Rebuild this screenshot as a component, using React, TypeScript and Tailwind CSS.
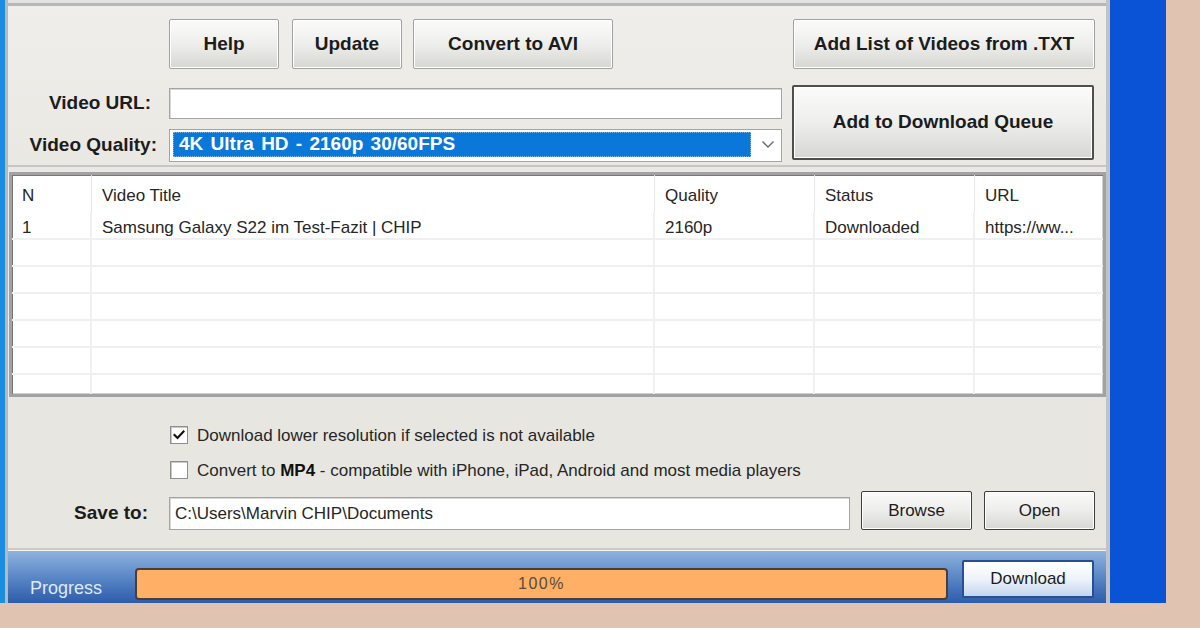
import React from "react";

const F = "font-['Liberation_Sans',Arial,sans-serif]";

function TopButton({ w, children, strong }: { w: string; children: React.ReactNode; strong?: boolean }) {
  return (
    <div
      className={`${w} h-full flex items-center justify-center rounded-[2px] bg-linear-to-b from-[#fbfbfa] via-[#eeeeec] to-[#d6d6d2] text-[19px] font-bold text-[#1c1c1c] ${
        strong ? "border-2 border-[#4e4e4e] shadow-[inset_0_0_0_1px_#ffffff]" : "border border-[#a2a2a2] shadow-[inset_0_0_0_1px_#ffffff]"
      }`}
    >
      {children}
    </div>
  );
}

function SmallButton({ children }: { children: React.ReactNode }) {
  return (
    <div className="w-[111px] h-[39px] flex items-center justify-center rounded-[2px] border border-[#3e3e3e] shadow-[inset_0_0_0_1px_#ffffff] bg-linear-to-b from-[#fafafa] via-[#ededeb] to-[#d7d7d3] text-[17px] text-[#1c1c1c]">
      {children}
    </div>
  );
}

function Checkbox({ checked }: { checked?: boolean }) {
  return (
    <div className="w-[18px] h-[18px] bg-white border border-[#8e8e8e] shadow-[inset_1px_1px_0_#c9c9c9] flex items-center justify-center">
      {checked && (
        <svg width="12" height="12" viewBox="0 0 12 12">
          <path d="M1.5 6 L4.5 9 L10.5 2.5" fill="none" stroke="#111" strokeWidth="2.2" strokeLinecap="square" />
        </svg>
      )}
    </div>
  );
}

const cols = [
  { w: "w-[80px]", h: "N", v: "1" },
  { w: "w-[563px]", h: "Video Title", v: "Samsung Galaxy S22 im Test-Fazit | CHIP" },
  { w: "w-[160px]", h: "Quality", v: "2160p" },
  { w: "w-[160px]", h: "Status", v: "Downloaded" },
  { w: "flex-1", h: "URL", v: "https://ww..." },
];

export default function App() {
  const emptyRows = [0, 1, 2, 3, 4, 5];
  return (
    <div className={`w-[1200px] h-[628px] bg-[#e1c3b2] ${F} overflow-hidden`}>
      <div className="flex h-[603px]">
        <div className="w-[5px] h-full bg-[#1b8ee2]" />
        <div className="w-[1105px] h-full flex flex-col border-l-[3px] border-r-[4px] border-l-[#b9b9b9] border-r-[#c2c2c2] bg-[#ecebe7]">
          <div className="h-[3px] bg-[#e2e2e2]" />
          <div className="h-[3px] bg-[#b7b7b7]" />
          {/* Top section */}
          <div className="h-[159px] flex flex-col pt-[13px] bg-linear-to-b from-[#efeeea] to-[#e9e8e3]">
            <div className="h-[50px] flex pl-[161px] pr-[11px]">
              <TopButton w="w-[110px]">Help</TopButton>
              <div className="w-[13px]" />
              <TopButton w="w-[110px]">Update</TopButton>
              <div className="w-[11px]" />
              <TopButton w="w-[200px]">Convert to AVI</TopButton>
              <div className="flex-1" />
              <TopButton w="w-[302px]">Add List of Videos from .TXT</TopButton>
            </div>
            <div className="mt-[16px] flex">
              <div className="w-[774px] flex flex-col">
                <div className="mt-[3px] h-[31px] flex">
                  <div className="w-[161px] flex items-center justify-end pr-[18px] text-[19px] font-bold text-[#1c1c1c]">Video URL:</div>
                  <div className="flex-1 bg-white border border-[#a4a4a4] shadow-[inset_1px_1px_0_#d8d8d8]" />
                </div>
                <div className="mt-[10px] h-[33px] flex">
                  <div className="w-[161px] flex items-center justify-end pr-[12px] text-[19px] font-bold text-[#1c1c1c]">Video Quality:</div>
                  <div className="flex-1 bg-white border border-[#a4a4a4] flex items-stretch pl-[3px] pt-[2px] pb-[4px]">
                    <div className="w-[578px] bg-[#0a78d8] border border-dotted border-[#7fb6ea] flex items-center pl-[5px] text-[19px] font-bold text-white whitespace-pre [word-spacing:2px]">
                      4K Ultra HD - 2160p 30/60FPS
                    </div>
                    <div className="flex-1 flex items-center justify-center pl-[4px]">
                      <svg width="14" height="9" viewBox="0 0 14 9">
                        <path d="M1.5 1.5 L7 7 L12.5 1.5" fill="none" stroke="#6a6a6a" strokeWidth="1.4" />
                      </svg>
                    </div>
                  </div>
                </div>
              </div>
              <div className="ml-[10px] h-[75px] flex">
                <TopButton w="w-[302px]" strong>Add to Download Queue</TopButton>
              </div>
            </div>
          </div>
          <div className="h-[2px] bg-[#c6c6c4]" />
          <div className="h-[5px] bg-[#e9e8e4]" />
          {/* Table */}
          <div className="h-[225px] ml-[1px] border-[3px] border-[#a2a2a2] shadow-[inset_1px_1px_0_#777777,inset_-1px_-1px_0_#d0d0d0] bg-white overflow-hidden flex flex-col text-[17px] text-[#262626]">
            <div className="h-[38px] flex shrink-0">
              {cols.map((c, i) => (
                <div key={i} className={`${c.w} h-full flex items-center pl-[10px] pt-[4px] ${i < 4 ? "border-r border-[#e6e6e6]" : ""}`}>
                  {c.h}
                </div>
              ))}
            </div>
            <div className="h-[27px] flex shrink-0 border-b-2 border-[#f0f0f0]">
              {cols.map((c, i) => (
                <div key={i} className={`${c.w} h-full flex items-center pl-[10px] pt-[4px] ${i < 4 ? "border-r-2 border-[#f0f0f0]" : ""}`}>
                  {c.v}
                </div>
              ))}
            </div>
            {emptyRows.map((r) => (
              <div key={r} className="h-[27px] flex shrink-0 border-b-2 border-[#f0f0f0]">
                {cols.map((c, i) => (
                  <div key={i} className={`${c.w} h-full ${i < 4 ? "border-r-2 border-[#f0f0f0]" : ""}`} />
                ))}
              </div>
            ))}
          </div>
          <div className="h-[3px] bg-[#e7e6e2]" />
          {/* Options */}
          <div className="h-[148px] flex flex-col pt-[26px] bg-[#e7e6e1] text-[17px] text-[#262626]">
            <div className="h-[18px] flex items-center pl-[162px]">
              <Checkbox checked />
              <span className="ml-[9px] pt-[1px]">Download lower resolution if selected is not available</span>
            </div>
            <div className="mt-[17px] h-[18px] flex items-center pl-[162px]">
              <Checkbox />
              <span className="ml-[9px] pt-[2px]">
                Convert to <b className="font-bold text-[#111]">MP4</b> - compatible with iPhone, iPad, Android and most media players
              </span>
            </div>
            <div className="mt-[12px] h-[39px] flex items-end">
              <div className="w-[161px] h-[33px] flex items-center justify-end pr-[21px] text-[19px] font-bold text-[#1c1c1c]">Save to:</div>
              <div className="w-[681px] h-[33px] bg-white border border-[#a4a4a4] shadow-[inset_1px_1px_0_#d8d8d8] flex items-center pl-[5px]">
                C:\Users\Marvin CHIP\Documents
              </div>
              <div className="ml-[11px]">
                <SmallButton>Browse</SmallButton>
              </div>
              <div className="ml-[12px]">
                <SmallButton>Open</SmallButton>
              </div>
            </div>
          </div>
          <div className="h-[2px] bg-[#c9c9c6]" />
          <div className="h-[1px] bg-[#f4f4f4]" />
          {/* Progress */}
          <div className="h-[52px] flex items-start pl-[22px] bg-linear-to-b from-[#8fb3de] via-[#5a87c6] to-[#2d5cab]">
            <div className="w-[105px] mt-[26px] h-[22px] flex items-center text-[18px] text-[#dfeaf8]">Progress</div>
            <div className="w-[813px] h-[32px] mt-[17px] rounded-[4px] border-2 border-[#4a3f36] bg-[#ffb066] flex items-center justify-center text-[16px] tracking-[1.5px] text-[#5a4a3a]">
              100%
            </div>
            <div className="ml-[14px] mt-[9px] w-[132px] h-[38px] rounded-[2px] border-2 border-[#2a4f90] bg-linear-to-b from-[#ffffff] via-[#eef3f9] to-[#c3d6ee] flex items-center justify-center text-[17px] text-[#1c1c1c]">
              Download
            </div>
          </div>
        </div>
        <div className="w-[56px] h-full bg-[#0a53d6]" />
      </div>
    </div>
  );
}
